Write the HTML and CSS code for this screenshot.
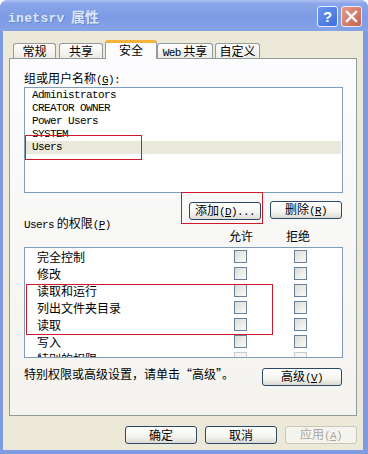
FILE: index.html
```html
<!DOCTYPE html>
<html lang="zh-CN">
<head>
    <meta charset="UTF-8">
    <meta name="viewport" content="width=device-width, initial-scale=1.0">
    <title>inetsrv 属性</title>
    <link rel="stylesheet" href="styles.css">
</head>
<body>
    <div class="window">
        <div class="titlebar">
            <span class="title"><span class="lat">inetsrv</span> 属性</span>
            <div class="title-btns">
                <span class="tbtn help">?</span>
                <span class="tbtn close">
                    <svg width="13" height="13" viewBox="0 0 13 13"><path d="M2 2 L11 11 M11 2 L2 11" stroke="#fff" stroke-width="2.4" stroke-linecap="square"/></svg>
                </span>
            </div>
        </div>

        <div class="client">
            <div class="tabs">
                <div class="tab t1">常规</div>
                <div class="tab t2">共享</div>
                <div class="tab active t3">安全</div>
                <div class="tab t4"><span class="lat">Web</span> 共享</div>
                <div class="tab t5">自定义</div>
            </div>

            <div class="panel">
                <div class="label first">组或用户名称<span class="lat">(<u>G</u>):</span></div>
                <div class="listbox">
                    <div class="item">Administrators</div>
                    <div class="item">CREATOR OWNER</div>
                    <div class="item">Power Users</div>
                    <div class="item">SYSTEM</div>
                    <div class="item selected">Users</div>
                    <div class="mark mark-users"></div>
                </div>

                <div class="btn-row">
                    <div class="btn-wrap">
                        <button class="btn">添加<span class="lat">(<u>D</u>)...</span></button>
                        <div class="mark mark-add"></div>
                    </div>
                    <button class="btn">删除<span class="lat">(<u>R</u>)</span></button>
                </div>

                <div class="label perm-title"><span class="lat">Users</span> 的权限<span class="lat">(<u>P</u>)</span></div>
                <div class="cols">
                    <span class="col">允许</span>
                    <span class="col">拒绝</span>
                </div>

                <div class="permlist">
                    <div class="rows">
                        <div class="row"><span class="name">完全控制</span><span class="chk"></span><span class="chk"></span></div>
                        <div class="row"><span class="name">修改</span><span class="chk"></span><span class="chk"></span></div>
                        <div class="row"><span class="name">读取和运行</span><span class="chk"></span><span class="chk"></span></div>
                        <div class="row"><span class="name">列出文件夹目录</span><span class="chk"></span><span class="chk"></span></div>
                        <div class="row"><span class="name">读取</span><span class="chk"></span><span class="chk"></span></div>
                        <div class="row"><span class="name">写入</span><span class="chk"></span><span class="chk"></span></div>
                        <div class="row dim"><span class="name">特别的权限</span><span class="chk"></span><span class="chk"></span></div>
                        <div class="mark mark-rows"></div>
                    </div>
                    <div class="scrollbar">
                        <div class="sb-btn">
                            <svg width="9" height="6" viewBox="0 0 9 6"><path d="M1 5 L4.5 1.5 L8 5" fill="none" stroke="#4d6185" stroke-width="2"/></svg>
                        </div>
                        <div class="sb-track">
                            <div class="sb-thumb"><span class="grip"></span></div>
                        </div>
                        <div class="sb-btn">
                            <svg width="9" height="6" viewBox="0 0 9 6"><path d="M1 1 L4.5 4.5 L8 1" fill="none" stroke="#4d6185" stroke-width="2"/></svg>
                        </div>
                    </div>
                </div>

                <div class="adv-row">
                    <span class="adv-text">特别权限或高级设置，请单击“高级”。</span>
                    <button class="btn wide">高级<span class="lat">(<u>V</u>)</span></button>
                </div>
            </div>

            <div class="footer">
                <button class="btn">确定</button>
                <button class="btn">取消</button>
                <button class="btn disabled">应用<span class="lat">(<u>A</u>)</span></button>
            </div>
        </div>
    </div>
</body>
</html>
```

FILE: styles.css
```css
* {
    box-sizing: border-box;
}
body {
    margin: 0;
    font-family: "Noto Sans CJK SC", "Liberation Sans", sans-serif;
    font-size: 12px;
    color: #000;
    background: #fff;
}
.lat {
    font-family: "Liberation Mono", monospace;
    font-size: 11px;
    letter-spacing: -0.6px;
}
u {
    text-decoration: underline;
}

.window {
    width: 368px;
    height: 454px;
    background: #7f9ce3;
    border-radius: 8px 8px 0 0;
    display: flex;
    flex-direction: column;
    padding: 0 5px 4px 3px;
}

/* title bar */
.titlebar {
    height: 31px;
    margin: 0 -5px 0 -3px;
    padding: 0 6px 0 8px;
    border-radius: 8px 8px 0 0;
    background: linear-gradient(#aec1f0 0%, #8aa6ea 12%, #7c9be4 55%, #86a3e8 100%);
    display: flex;
    align-items: center;
    justify-content: space-between;
}
.title {
    color: #dce6fa;
    font-weight: bold;
    font-size: 14px;
    text-shadow: 1px 1px 0 #6a88d0;
    word-spacing: 3px;
}
.title .lat {
    font-size: 13px;
    letter-spacing: 0.3px;
}
.title-btns {
    display: flex;
    gap: 3px;
    margin-top: 2px;
}
.tbtn {
    width: 21px;
    height: 21px;
    border: 1px solid #e8eefc;
    border-radius: 3px;
    display: flex;
    align-items: center;
    justify-content: center;
    color: #fff;
    font-family: "Liberation Sans", sans-serif;
    font-weight: bold;
    font-size: 15px;
}
.help {
    background: linear-gradient(135deg, #6d95ee, #3f6fdc);
}
.close {
    background: linear-gradient(135deg, #e49a8a, #c9614f);
}

/* client area */
.client {
    flex: 1;
    background: #ece9d8;
    padding: 9px 6px 6px 6px;
    display: flex;
    flex-direction: column;
}
.tabs {
    height: 18px;
    display: flex;
    align-items: flex-end;
    padding-left: 4px;
    position: relative;
    z-index: 1;
}
.tab {
    height: 15px;
    border: 1px solid #919b9c;
    border-bottom: none;
    border-radius: 3px 3px 0 0;
    background: linear-gradient(#fefefe, #ecebe6);
    line-height: 14px;
    text-align: center;
    white-space: nowrap;
}
.t1 { width: 43px; margin-right: 3px; }
.t2 { width: 44px; margin-right: 2px; }
.t3 { width: 52px; }
.t4 { width: 56px; margin-right: 2px; }
.t5 { width: 45px; }
.tab.active {
    height: 19px;
    margin-bottom: -1px;
    background: #fcfcfe;
    border-top: 3px solid #f6b33c;
    line-height: 14px;
}

.panel {
    height: 358px;
    border: 1px solid #919b9c;
    background: linear-gradient(#fcfcfe, #f4f3ee);
    padding: 0 13px 0 14px;
    display: flex;
    flex-direction: column;
}
.label {
    line-height: 14px;
    white-space: nowrap;
}
.label.first {
    margin-top: 12px;
    height: 14px;
}

.listbox {
    position: relative;
    margin-top: 2px;
    height: 106px;
    border: 1px solid #7f9db9;
    background: #fff;
    padding: 1px 1px 0 1px;
}
.item {
    height: 13px;
    line-height: 13px;
    padding-left: 6px;
    font-family: "Liberation Mono", monospace;
    font-size: 11px;
    letter-spacing: -0.6px;
}
.item.selected {
    background: #ebe9dc;
}

.mark {
    position: absolute;
    border: 1px solid #d0192b;
    pointer-events: none;
}
.mark-users {
    left: 0;
    top: 47px;
    width: 117px;
    height: 25px;
}

.btn-row {
    margin-top: 8px;
    height: 18px;
    display: flex;
    justify-content: flex-end;
    gap: 9px;
    padding-right: 1px;
}
.btn-wrap {
    position: relative;
}
.mark-add {
    left: -8px;
    top: -9px;
    width: 82px;
    height: 32px;
}

.btn {
    width: 72px;
    height: 18px;
    padding: 0;
    border: 1px solid #2b4866;
    border-radius: 3px;
    background: linear-gradient(#ffffff 0%, #f4f4f0 60%, #dcdad2 100%);
    font-family: "Noto Sans CJK SC", sans-serif;
    font-size: 12px;
    line-height: 14px;
    color: #000;
    white-space: nowrap;
}
.btn.wide {
    width: 80px;
}
.btn.disabled {
    border-color: #c9c7ba;
    color: #aca899;
    background: #f4f3ee;
}

.perm-title {
    margin-top: -2px;
    height: 12px;
    line-height: 12px;
}
.cols {
    height: 12px;
    line-height: 12px;
    margin-top: 1px;
    display: flex;
    padding-left: 205px;
}
.col {
    width: 60px;
}

.permlist {
    margin-top: 5px;
    height: 111px;
    border: 1px solid #7f9db9;
    background: #fff;
    display: flex;
    overflow: hidden;
}
.rows {
    position: relative;
    flex: 1;
}
.row {
    height: 17px;
    display: flex;
    align-items: center;
    padding-left: 12px;
}
.name {
    width: 197px;
    white-space: nowrap;
}
.chk {
    width: 13px;
    height: 13px;
    border: 1px solid #6a8299;
    background: linear-gradient(135deg, #dcdcd6, #fbfbf9);
    margin-right: 47px;
}
.row.dim .chk {
    border-color: #c5ccd2;
    background: #f7f7f5;
}
.mark-rows {
    left: 1px;
    top: 36px;
    width: 247px;
    height: 51px;
}

.scrollbar {
    width: 16px;
    background: #f6f5ee;
    display: flex;
    flex-direction: column;
    padding: 1px 0 1px 1px;
}
.sb-btn {
    height: 15px;
    border: 1px solid #b4c8f6;
    border-radius: 2px;
    background: linear-gradient(135deg, #dce6fd, #bacdf7);
    display: flex;
    align-items: center;
    justify-content: center;
}
.sb-track {
    flex: 1;
    padding: 1px 0 8px 0;
}
.sb-thumb {
    height: 68px;
    border: 1px solid #b4c8f6;
    border-radius: 2px;
    background: linear-gradient(90deg, #c9d8fc, #b8cbf7);
    display: flex;
    align-items: center;
    justify-content: center;
}
.grip {
    width: 7px;
    height: 7px;
    background: repeating-linear-gradient(#eef3fe 0 1px, #8ea6d8 1px 2px);
}

.adv-row {
    margin-top: 10px;
    height: 18px;
    display: flex;
    justify-content: space-between;
    align-items: flex-start;
    padding-right: 1px;
}
.adv-text {
    height: 12px;
    line-height: 12px;
    white-space: nowrap;
}

.footer {
    margin-top: 10px;
    display: flex;
    justify-content: flex-end;
    gap: 8px;
}
.footer .btn {
    width: 72px;
}
```
